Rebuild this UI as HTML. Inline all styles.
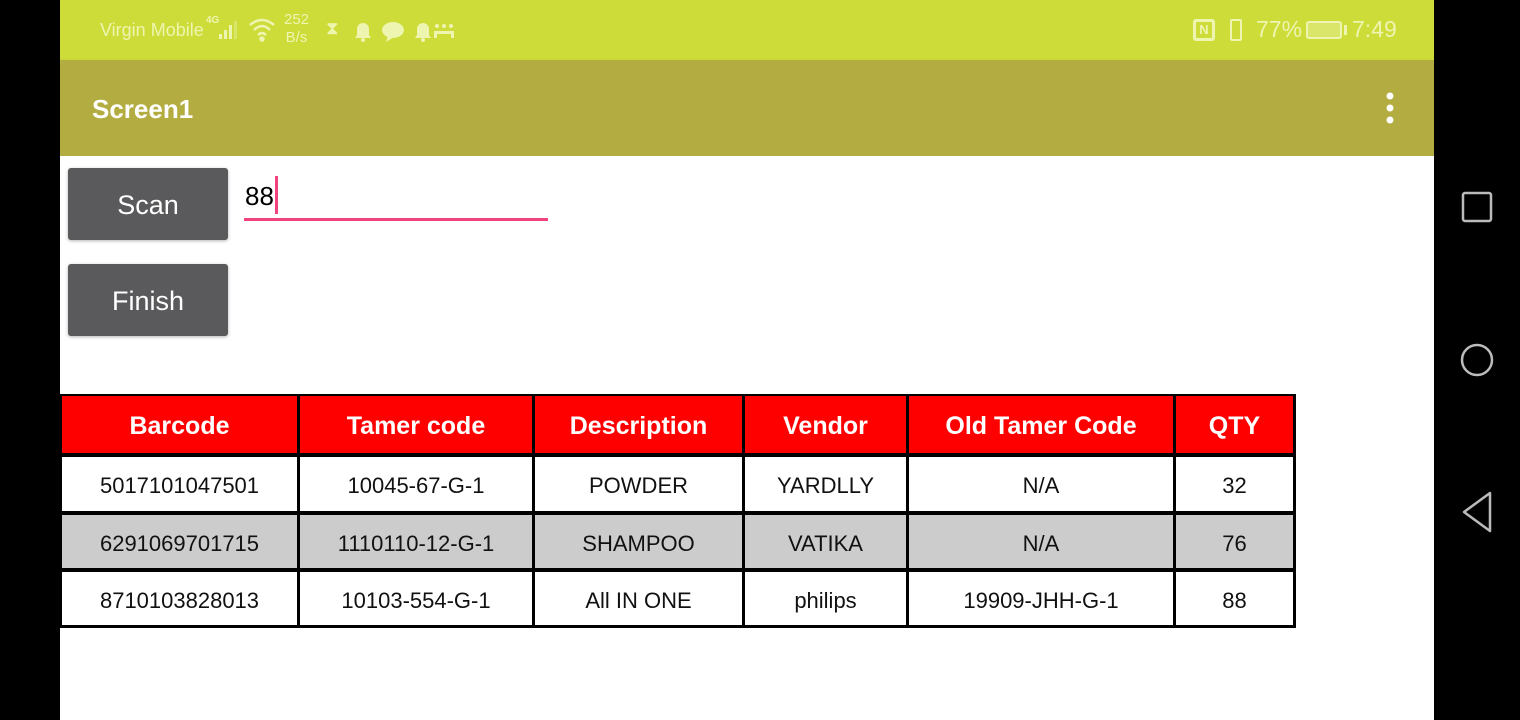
<!DOCTYPE html>
<html><head><meta charset="utf-8"><style>
*{margin:0;padding:0;box-sizing:border-box}
body{width:1520px;height:720px;background:#000;position:relative;overflow:hidden;font-family:"Liberation Sans",Roboto,sans-serif}
.abs{position:absolute}
.sb{left:60px;top:0;width:1374px;height:60px;background:#cddc39;color:#eef5b0}
.tb{left:60px;top:60px;width:1374px;height:96px;background:#b3ad41;box-shadow:0 2px 4px rgba(0,0,0,.2)}
.content{left:60px;top:156px;width:1374px;height:564px;background:#fff}
.btn{background:#5a5a5c;color:#fff;font-size:27px;display:flex;align-items:center;justify-content:center;border-radius:3px;box-shadow:0 1px 3px rgba(0,0,0,.3);padding-top:3px}
.c{position:absolute;display:flex;align-items:center;justify-content:center;font-size:22px;color:#111;padding-top:4px}
.h{background:#f00;color:#fff;font-weight:bold;font-size:25px}
.g{background:#ccc}
.w{background:#fff}
</style></head><body>
<div class="abs sb">
<div class="abs" style="left:40px;top:20px;font-size:18px">Virgin Mobile</div>
<div class="abs" style="left:146px;top:15px;font-size:10px;font-weight:bold">4G</div>
<svg class="abs" style="left:158px;top:18px" width="24" height="24"><rect x="1" y="16" width="3" height="5" fill="#eef5b0"/><rect x="6" y="12" width="3" height="9" fill="#eef5b0"/><rect x="11" y="7" width="3" height="14" fill="#eef5b0"/><rect x="16" y="3" width="3" height="18" fill="#d9e66a"/></svg>
<svg class="abs" style="left:188px;top:16px" width="28" height="26" fill="none" stroke="#eef5b0" stroke-width="2.5"><path d="M2 9 Q14 -1 26 9"/><path d="M6 14 Q14 6 22 14"/><path d="M10 19 Q14 15 18 19"/><circle cx="14" cy="23" r="1.5" fill="#eef5b0"/></svg>
<div class="abs" style="left:224px;top:11px;font-size:15px;line-height:18px;text-align:center">252<br>B/s</div>
<div class="abs" style="left:266px;top:18px;font-size:18px">⧗</div>
<svg class="abs" style="left:292px;top:18px" width="110" height="26" fill="#eef5b0"><path d="M3 20 L5 17 V11 a6 6 0 0 1 12 0 V17 L19 20Z"/><circle cx="11" cy="22" r="2"/><ellipse cx="41" cy="12" rx="11" ry="8"/><path d="M36 18 L34 24 L42 19Z"/><path d="M63 20 L65 17 V11 a6 6 0 0 1 12 0 V17 L79 20Z"/><circle cx="71" cy="22" r="2"/><circle cx="85" cy="8" r="2"/><circle cx="92" cy="8" r="2"/><circle cx="99" cy="8" r="2"/><rect x="82" y="13" width="20" height="3"/><rect x="82" y="16" width="3" height="4"/><rect x="99" y="16" width="3" height="4"/></svg>
<div class="abs" style="left:1133px;top:19px;width:22px;height:22px;border:3px solid #eef5b0;border-radius:3px;font-size:13px;font-weight:bold;text-align:center;line-height:16px">N</div>
<div class="abs" style="left:1170px;top:19px;width:12px;height:22px;border:2px solid #eef5b0;border-radius:2px"></div>
<div class="abs" style="left:1196px;top:16px;font-size:23px">77%</div>
<div class="abs" style="left:1246px;top:21px;width:36px;height:18px;border:2px solid #eef5b0;border-radius:3px;background:#d9e66a"></div>
<div class="abs" style="left:1284px;top:25px;width:3px;height:10px;background:#eef5b0"></div>
<div class="abs" style="left:1292px;top:16px;font-size:23px">7:49</div>
</div>
<div class="abs tb"><div class="abs" style="left:32px;top:34px;color:#fff;font-size:26px;font-weight:bold">Screen1</div>
<svg class="abs" style="left:1324px;top:30px" width="12" height="36" fill="#fff"><circle cx="6" cy="6" r="3.5"/><circle cx="6" cy="18" r="3.5"/><circle cx="6" cy="30" r="3.5"/></svg></div>
<div class="abs content"></div>
<div class="abs btn" style="left:68px;top:168px;width:160px;height:72px">Scan</div>
<div class="abs btn" style="left:68px;top:264px;width:160px;height:72px">Finish</div>
<div class="abs" style="left:245px;top:181px;font-size:26px;color:#000">88</div>
<div class="abs" style="left:275px;top:176px;width:3px;height:38px;background:#f0437f"></div>
<div class="abs" style="left:244px;top:218px;width:304px;height:3px;background:#f0437f"></div>
<div class="abs" style="left:60px;top:394px;width:1236px;height:234px;background:#000"></div>
<div class="abs" style="left:0;top:0">
<div class="c h" style="left:62px;top:396px;width:235px;height:57px">Barcode</div>
<div class="c h" style="left:300px;top:396px;width:232px;height:57px">Tamer code</div>
<div class="c h" style="left:535px;top:396px;width:207px;height:57px">Description</div>
<div class="c h" style="left:745px;top:396px;width:161px;height:57px">Vendor</div>
<div class="c h" style="left:909px;top:396px;width:264px;height:57px">Old Tamer Code</div>
<div class="c h" style="left:1176px;top:396px;width:117px;height:57px">QTY</div>

<div class="c w" style="left:62px;top:457px;width:235px;height:54px">5017101047501</div>
<div class="c w" style="left:300px;top:457px;width:232px;height:54px">10045-67-G-1</div>
<div class="c w" style="left:535px;top:457px;width:207px;height:54px">POWDER</div>
<div class="c w" style="left:745px;top:457px;width:161px;height:54px">YARDLLY</div>
<div class="c w" style="left:909px;top:457px;width:264px;height:54px">N/A</div>
<div class="c w" style="left:1176px;top:457px;width:117px;height:54px">32</div>

<div class="c g" style="left:62px;top:515px;width:235px;height:53px">6291069701715</div>
<div class="c g" style="left:300px;top:515px;width:232px;height:53px">1110110-12-G-1</div>
<div class="c g" style="left:535px;top:515px;width:207px;height:53px">SHAMPOO</div>
<div class="c g" style="left:745px;top:515px;width:161px;height:53px">VATIKA</div>
<div class="c g" style="left:909px;top:515px;width:264px;height:53px">N/A</div>
<div class="c g" style="left:1176px;top:515px;width:117px;height:53px">76</div>

<div class="c w" style="left:62px;top:572px;width:235px;height:53px">8710103828013</div>
<div class="c w" style="left:300px;top:572px;width:232px;height:53px">10103-554-G-1</div>
<div class="c w" style="left:535px;top:572px;width:207px;height:53px">All IN ONE</div>
<div class="c w" style="left:745px;top:572px;width:161px;height:53px">philips</div>
<div class="c w" style="left:909px;top:572px;width:264px;height:53px">19909-JHH-G-1</div>
<div class="c w" style="left:1176px;top:572px;width:117px;height:53px">88</div>
</div>
<svg class="abs" style="left:1450px;top:180px" width="60" height="360" fill="none" stroke="#bbb" stroke-width="2.5"><rect x="13" y="13" width="28" height="28" rx="2"/><circle cx="27" cy="180" r="15"/><path d="M40 313 L14 332 L40 351Z" stroke-linejoin="round"/></svg>
</body></html>
